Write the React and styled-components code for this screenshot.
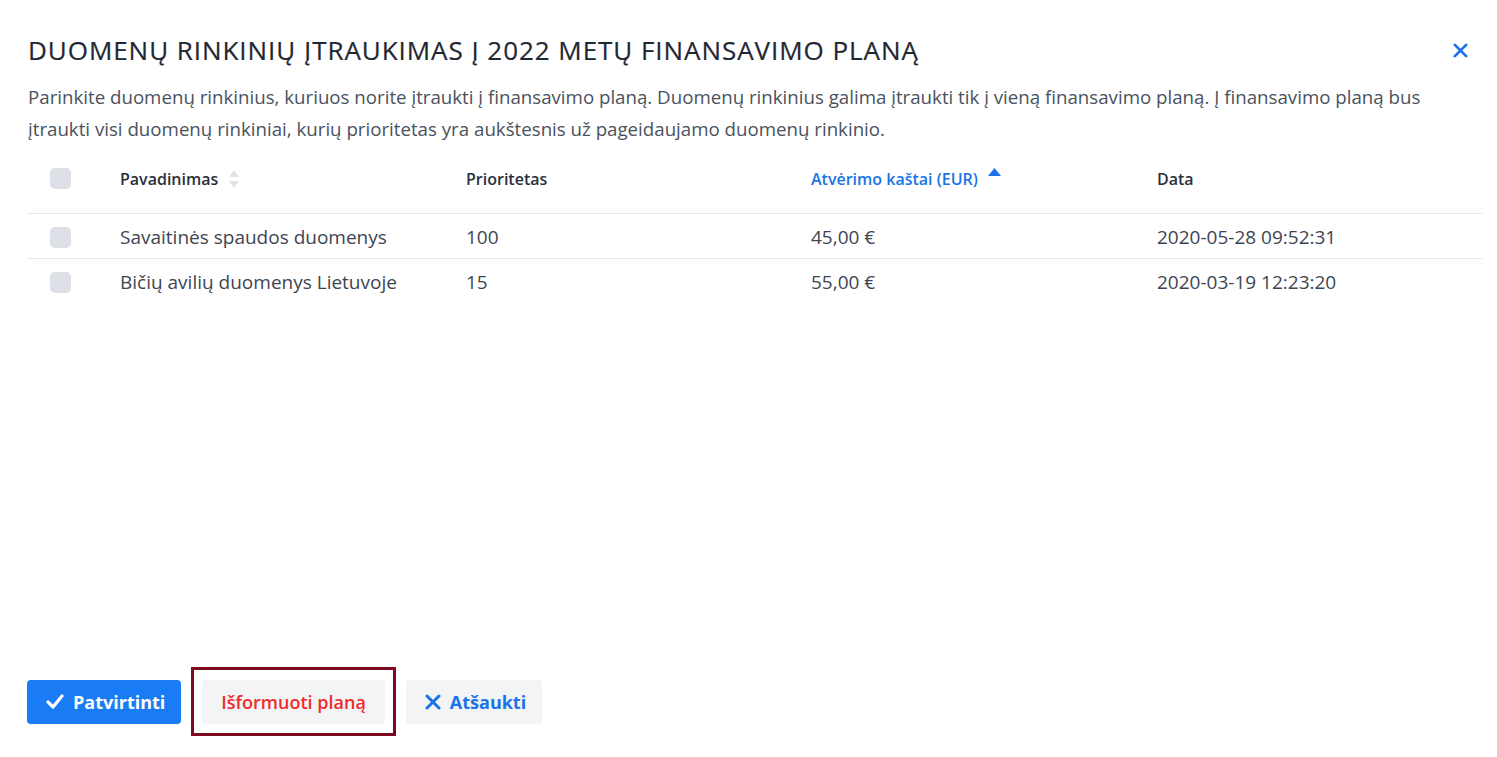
import styled, { createGlobalStyle } from "styled-components";

const GlobalStyle = createGlobalStyle`
  html, body {
    margin: 0;
    padding: 0;
    background: #ffffff;
  }
  body {
    font-family: "Open Sans", "Noto Sans", "Liberation Sans", sans-serif;
    color: #2a313c;
  }
`;

const Dialog = styled.div`
  display: flex;
  flex-direction: column;
  height: 757px;
  box-sizing: border-box;
  padding: 30px 15px 21px 27px;
`;

const Header = styled.div`
  display: flex;
  align-items: center;
  justify-content: space-between;
  padding-left: 1px;
  padding-right: 12px;
`;

const Title = styled.h1`
  margin: 0;
  font-size: 26px;
  line-height: 40px;
  font-weight: 500;
  color: #1f2733;
  letter-spacing: 0.95px;
  -webkit-text-stroke: 0.2px #1f2733;
`;

const CloseButton = styled.button`
  display: flex;
  align-items: center;
  justify-content: center;
  width: 20px;
  height: 20px;
  padding: 0;
  border: none;
  background: none;
  color: #1a73e8;
`;

const Description = styled.p`
  margin: 11px 0 0 1px;
  font-size: 18.7px;
  line-height: 32px;
  color: #4a5260;
`;

const Table = styled.table`
  width: 1455px;
  border-collapse: collapse;
`;

const Th = styled.th`
  height: 67px;
  padding: 0 0 1px;
  text-align: left;
  font-size: 16px;
  font-weight: 600;
  color: ${(p) => (p.$active ? "#1a73e8" : "#2a313c")};
  border-bottom: 1px solid #e6e8ee;
  width: ${(p) => p.$w || "auto"};
  vertical-align: middle;
`;

const Td = styled.td`
  height: 45px;
  padding: 2px 0 0;
  box-sizing: border-box;
  font-size: 19px;
  color: #3e4552;
  border-bottom: ${(p) => (p.$last ? "none" : "1px solid #e6e8ee")};
`;

const CheckCell = styled.div`
  padding-left: 23px;
  display: flex;
  align-items: center;
`;

const Checkbox = styled.span`
  display: inline-block;
  width: 21px;
  height: 21px;
  border-radius: 5px;
  background: #dde0e6;
`;

const HeadLabel = styled.span`
  display: inline-flex;
  align-items: ${(p) => (p.$top ? "flex-start" : "center")};
  gap: 10px;
`;

const Footer = styled.div`
  margin-top: auto;
  display: flex;
  align-items: center;
  gap: 10px;
`;

const Button = styled.button`
  display: inline-flex;
  align-items: center;
  gap: 9px;
  height: 44px;
  padding: 0 ${(p) => (p.$icon ? "16px 0 19px" : "19px")};
  border: none;
  border-radius: 4px;
  font-family: inherit;
  font-size: 18px;
  font-weight: ${(p) => (p.$variant === "danger" ? 600 : 700)};
  background: ${(p) => (p.$variant === "primary" ? "#1a7cf4" : "#f3f4f6")};
  color: ${(p) =>
    p.$variant === "primary"
      ? "#ffffff"
      : p.$variant === "danger"
      ? "#f02b2b"
      : "#1a73e8"};
`;

const Highlight = styled.div`
  padding: 10px 8px 9px;
  border: 3px solid #7d0a1f;
`;

const SortBoth = () => (
  <svg width="12" height="20" viewBox="0 0 12 20">
    <path d="M6 1 L11 8 H1 Z" fill="#e0e3e8" />
    <path d="M6 19 L11 12 H1 Z" fill="#e0e3e8" />
  </svg>
);

const SortUp = () => (
  <svg width="13" height="8" viewBox="0 0 13 8">
    <path d="M6.5 0 L13 8 H0 Z" fill="#1a73e8" />
  </svg>
);

const CloseIcon = ({ size = 16, color = "currentColor" }) => (
  <svg width={size} height={size} viewBox="0 0 16 16">
    <path
      d="M2 2 L14 14 M14 2 L2 14"
      stroke={color}
      strokeWidth="3"
      strokeLinecap="round"
    />
  </svg>
);

const CheckIcon = () => (
  <svg width="18" height="15" viewBox="0 0 18 15">
    <path
      d="M2 8 L7 13 L16 2"
      stroke="#ffffff"
      strokeWidth="3.2"
      fill="none"
      strokeLinecap="round"
      strokeLinejoin="round"
    />
  </svg>
);

const rows = [
  {
    name: "Savaitinės spaudos duomenys",
    priority: "100",
    cost: "45,00 €",
    date: "2020-05-28 09:52:31",
  },
  {
    name: "Bičių avilių duomenys Lietuvoje",
    priority: "15",
    cost: "55,00 €",
    date: "2020-03-19 12:23:20",
  },
];

export default function App() {
  return (
    <>
      <GlobalStyle />
      <Dialog>
        <Header>
          <Title>DUOMENŲ RINKINIŲ ĮTRAUKIMAS Į 2022 METŲ FINANSAVIMO PLANĄ</Title>
          <CloseButton>
            <CloseIcon size={15} />
          </CloseButton>
        </Header>
        <Description>
          Parinkite duomenų rinkinius, kuriuos norite įtraukti į finansavimo
          planą. Duomenų rinkinius galima įtraukti tik į vieną finansavimo planą.
          Į finansavimo planą bus įtraukti visi duomenų rinkiniai, kurių
          prioritetas yra aukštesnis už pageidaujamo duomenų rinkinio.
        </Description>
        <Table>
          <thead>
            <tr>
              <Th $w="93px">
                <CheckCell>
                  <Checkbox />
                </CheckCell>
              </Th>
              <Th $w="346px">
                <HeadLabel>
                  Pavadinimas
                  <SortBoth />
                </HeadLabel>
              </Th>
              <Th $w="345px">Prioritetas</Th>
              <Th $w="346px" $active>
                <HeadLabel $top>
                  Atvėrimo kaštai (EUR)
                  <SortUp />
                </HeadLabel>
              </Th>
              <Th>Data</Th>
            </tr>
          </thead>
          <tbody>
            {rows.map((r, i) => (
              <tr key={r.name}>
                <Td $last={i === rows.length - 1}>
                  <CheckCell>
                    <Checkbox />
                  </CheckCell>
                </Td>
                <Td $last={i === rows.length - 1}>{r.name}</Td>
                <Td $last={i === rows.length - 1}>{r.priority}</Td>
                <Td $last={i === rows.length - 1}>{r.cost}</Td>
                <Td $last={i === rows.length - 1}>{r.date}</Td>
              </tr>
            ))}
          </tbody>
        </Table>
        <Footer>
          <Button $variant="primary" $icon>
            <CheckIcon />
            Patvirtinti
          </Button>
          <Highlight>
            <Button $variant="danger">Išformuoti planą</Button>
          </Highlight>
          <Button $icon>
            <CloseIcon size={16} />
            Atšaukti
          </Button>
        </Footer>
      </Dialog>
    </>
  );
}
